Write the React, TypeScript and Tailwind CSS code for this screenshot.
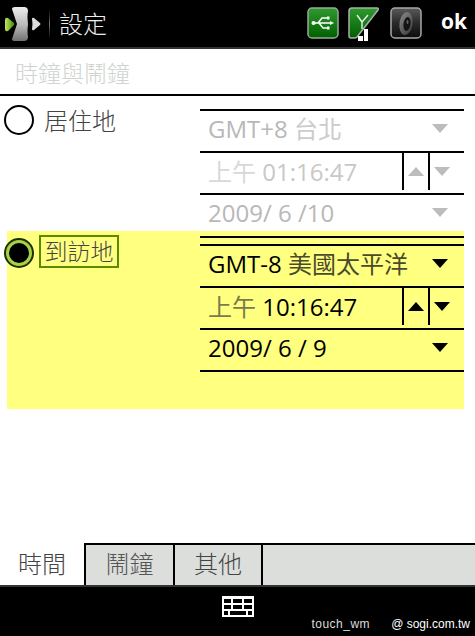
const cjk = 'font-["Open_Sans","Noto_Sans_CJK_TC",sans-serif]'

function StartLogo() {
  return (
    <svg width="42" height="48" viewBox="0 0 42 48" className="shrink-0">
      <defs>
        <linearGradient id="blob" x1="0" y1="0" x2="0" y2="1">
          <stop offset="0" stopColor="#ececec" />
          <stop offset="0.55" stopColor="#b8b8b8" />
          <stop offset="1" stopColor="#707070" />
        </linearGradient>
        <linearGradient id="leaf" x1="0" y1="0" x2="1" y2="0">
          <stop offset="0" stopColor="#c4e65a" />
          <stop offset="1" stopColor="#3c8a10" />
        </linearGradient>
      </defs>
      <path d="M12 9 Q12 7 15 7 L24 7 Q28 7 28 11 Q27 16 28 24 Q27 32 28 37 Q28 41 24 41 L15 41 Q12 41 12 39 L17 24Z" fill="url(#blob)" />
      <path d="M5 20 Q5 17 8 18 L14 23 Q15 24 14 25 L8 31 Q5 32 5 29Z" fill="url(#leaf)" />
      <path d="M32 19 Q32 17 34 18 L40 23 Q41 24 40 25 L34 30 Q32 31 32 29 Q33 24 32 19Z" fill="#dcdcdc" />
    </svg>
  )
}

function UsbIcon() {
  return (
    <svg width="32" height="32" viewBox="0 0 32 32">
      <defs>
        <linearGradient id="usbBg" x1="0" y1="0" x2="0" y2="1">
          <stop offset="0" stopColor="#2f9a2f" />
          <stop offset="1" stopColor="#005f00" />
        </linearGradient>
      </defs>
      <rect x="1" y="1" width="30" height="30" rx="4" fill="url(#usbBg)" stroke="#9aa89a" strokeWidth="1.5" />
      <circle cx="6.5" cy="16" r="2" fill="#fff" />
      <path d="M7 16H23M11 16L15 11H20M12 16L16 21H20" stroke="#fff" strokeWidth="1.4" fill="none" />
      <path d="M23 14L27 16L23 18Z" fill="#fff" />
      <rect x="20" y="9.5" width="2.5" height="3" fill="#fff" />
      <rect x="20" y="19.5" width="2.5" height="3" fill="#fff" />
    </svg>
  )
}

function SignalIcon() {
  return (
    <svg width="33" height="34" viewBox="0 0 33 34">
      <defs>
        <linearGradient id="sigBg" x1="0" y1="0" x2="0" y2="1">
          <stop offset="0" stopColor="#2f9a2f" />
          <stop offset="1" stopColor="#005f00" />
        </linearGradient>
      </defs>
      <path d="M1 4 Q1 1 4 1 L29 1 Q31 1 30 3 L9 30 Q8 31 6 31 L3 31 Q1 31 1 29Z" fill="url(#sigBg)" stroke="#a8b0a8" strokeWidth="1.5" />
      <path d="M9 8L14 15L20 8M14 15V22" stroke="#e8f0e8" strokeWidth="1.4" fill="none" />
      <rect x="10" y="29" width="5" height="5" fill="#fff" />
      <rect x="16" y="22" width="4" height="12" fill="#fff" />
    </svg>
  )
}

function SpeakerIcon() {
  return (
    <svg width="32" height="32" viewBox="0 0 32 32">
      <defs>
        <linearGradient id="spkBg" x1="0" y1="0" x2="0" y2="1">
          <stop offset="0" stopColor="#5a5a5a" />
          <stop offset="0.5" stopColor="#2a2a2a" />
          <stop offset="1" stopColor="#0c0c0c" />
        </linearGradient>
        <linearGradient id="cone" x1="0" y1="0" x2="1" y2="1">
          <stop offset="0" stopColor="#8a8a8a" />
          <stop offset="1" stopColor="#3a3a3a" />
        </linearGradient>
      </defs>
      <rect x="1" y="1" width="30" height="30" rx="4" fill="url(#spkBg)" stroke="#a8a8a8" strokeWidth="1.5" />
      <ellipse cx="16" cy="16.5" rx="6.5" ry="11.5" fill="url(#cone)" transform="rotate(8 16 16.5)" />
      <ellipse cx="17" cy="17" rx="3.5" ry="7" fill="#141414" transform="rotate(8 17 17)" />
      <ellipse cx="17.5" cy="15" rx="1" ry="2" fill="#666" />
    </svg>
  )
}

function KeyboardIcon() {
  return (
    <svg width="32" height="21" viewBox="0 0 32 21" shapeRendering="crispEdges">
      <rect width="32" height="21" fill="#fff" />
      <path d="M2 3H9V7H2ZM11 3H20V7H11ZM22 3H30V7H22ZM2 9H9V13H2ZM11 9H20V13H11ZM22 9H30V13H22ZM2 15H6V19H2ZM8 15H24V19H8ZM26 15H30V19H26Z" fill="#000" />
    </svg>
  )
}

function Arrow({ up, muted }: { up?: boolean; muted?: boolean }) {
  return (
    <svg width="16" height="9" viewBox="0 0 16 9" className="shrink-0">
      <path d={up ? 'M8 0L16 9H0Z' : 'M0 0H16L8 9Z'} fill={muted ? '#bcbcbc' : '#000'} />
    </svg>
  )
}

function DropRow({ label, muted, zh }: { label: string; muted?: boolean; zh?: string }) {
  return (
    <div className="flex items-center h-[42px] border-t-2 border-black pl-2 pr-[16px] pb-[5px] justify-between">
      <span className={`text-[24px] leading-none whitespace-pre ${muted ? 'text-[#b8b8b8]' : 'text-black'}`}>
        {label}
        {zh && <span className={muted ? 'text-[#cccccc]' : 'text-[#4a4a2c]'}>{zh}</span>}
      </span>
      <Arrow muted={muted} />
    </div>
  )
}

function TimeRow({ time, muted }: { time: string; muted?: boolean }) {
  return (
    <div className="flex items-stretch h-[42px] border-t-2 border-black">
      <span className={`flex-1 flex items-center pl-2 pb-[3px] text-[24px] leading-none whitespace-pre ${muted ? 'text-[#c8c8c8]' : 'text-black'}`}>
        <span className={muted ? 'text-[#d8d8d8]' : 'text-[#7a7a50]'}>上午 </span>
        {time}
      </span>
      <div className="w-[28px] mb-[3px] flex items-center justify-center border-x-2 border-black">
        <Arrow up muted={muted} />
      </div>
      <div className="w-[34px] flex items-center pl-[4px] pb-[3px]">
        <Arrow muted={muted} />
      </div>
    </div>
  )
}

function Selectors({ zone, zoneZh, time, date, muted }: { zone: string; zoneZh: string; time: string; date: string; muted?: boolean }) {
  return (
    <div className="w-[264px] shrink-0">
      <DropRow label={zone} zh={zoneZh} muted={muted} />
      <TimeRow time={time} muted={muted} />
      <DropRow label={date} muted={muted} />
    </div>
  )
}

export default function App() {
  return (
    <div className={`w-[475px] h-[636px] flex flex-col bg-white overflow-hidden ${cjk}`}>
      {/* Title bar */}
      <div className="h-[49px] shrink-0 bg-black border-b-2 border-[#333] flex items-center">
        <StartLogo />
        <div className="w-px h-[38px] bg-gradient-to-b from-black via-[#777] to-black ml-[7px]" />
        <span className="ml-[9px] text-[24px] leading-none text-[#eee] font-light">設定</span>
        <div className="ml-auto flex items-center -mt-[2px]">
          <UsbIcon />
          <div className="ml-[9px] mt-[2px]"><SignalIcon /></div>
          <div className="ml-[9px]"><SpeakerIcon /></div>
          <span className="ml-[19px] mr-[8px] -mt-[3px] text-[21px] leading-none font-bold text-white">ok</span>
        </div>
      </div>

      {/* Heading */}
      <div className="h-[47px] shrink-0 border-b-2 border-black flex items-center pl-[15px] pt-[4px]">
        <span className="text-[23px] leading-none text-[#d0d4d0] font-light">時鐘與鬧鐘</span>
      </div>

      <div className="flex-1 flex flex-col pt-[13px]">
        {/* Home */}
        <div className="h-[122px] flex">
          <div className="w-[200px] shrink-0 flex pl-[4px] -mt-[4px] items-start">
            <span className="w-[30px] h-[30px] rounded-full border-2 border-black shrink-0" />
            <span className="ml-[10px] mt-px text-[24px] leading-[30px] text-[#444] font-light">居住地</span>
          </div>
          <Selectors zone="GMT+8 " zoneZh="台北" time="01:16:47" date="2009/ 6 /10" muted />
        </div>

        {/* Visiting */}
        <div className="ml-[7px] h-[178px] w-[457px] bg-[#ffff80] flex pt-[5px]">
          <div className="w-[196px] shrink-0 flex items-start -ml-[3px]">
            <span className="w-[30px] h-[30px] mt-[2px] rounded-full border-2 border-[#1c3000] bg-[#a8d048] flex items-center justify-center shrink-0">
              <span className="w-[20px] h-[20px] rounded-full bg-black" />
            </span>
            <span className="ml-[5px] -mt-[1px] w-[80px] h-[33px] border-2 border-[#5c8a00] flex items-center justify-center text-[23px] leading-none text-[#444] font-light">到訪地</span>
          </div>
          <div>
            <div className="h-[8px] border-t-2 border-black w-[264px]" />
            <Selectors zone="GMT-8 " zoneZh="美國太平洋" time="10:16:47" date="2009/ 6 / 9" />
            <div className="h-[2px] bg-black w-[264px]" />
          </div>
        </div>
      </div>

      {/* Tabs */}
      <div className="h-[42px] shrink-0 flex items-stretch bg-[#dcdedc] border-t-2 border-black">
        <div className="w-[84px] -mt-[2px] bg-white flex items-center justify-center pb-[1px] text-[24px] leading-none text-[#444] font-light">時間</div>
        <div className="w-[89px] border-l-2 border-black flex items-center justify-center pb-[3px] text-[24px] leading-none text-[#555] font-light">鬧鐘</div>
        <div className="w-[88px] border-l-2 border-black flex items-center justify-center pb-[3px] text-[24px] leading-none text-[#444] font-light">其他</div>
        <div className="flex-1 border-l-2 border-black" />
      </div>

      {/* Bottom bar */}
      <div className="h-[51px] shrink-0 bg-black border-t-2 border-[#333] flex flex-col items-center pt-[9px]">
        <KeyboardIcon />
        <div className='self-end flex pr-[5px] gap-[21px] text-[12px] leading-[14px] text-[#ddd] font-["Liberation_Sans",sans-serif]'>
          <span className="font-light tracking-[0.5px]">touch_wm</span>
          <span className="text-white">@ sogi.com.tw</span>
        </div>
      </div>
    </div>
  )
}
